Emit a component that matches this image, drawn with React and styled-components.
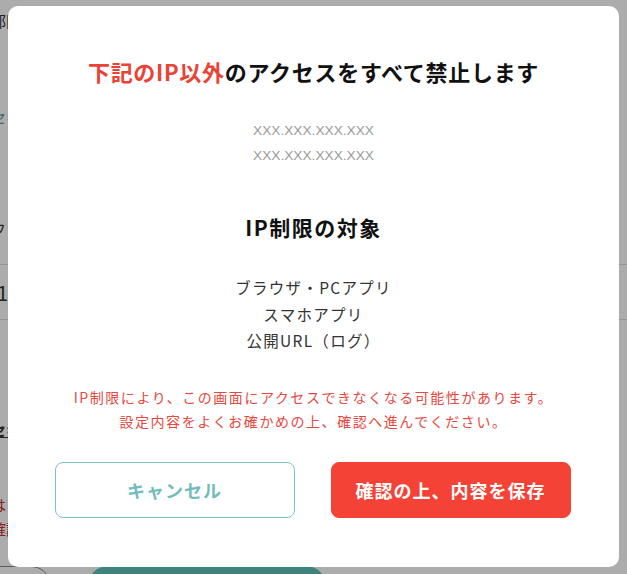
import React from "react";
import styled, { createGlobalStyle } from "styled-components";

const Global = createGlobalStyle`
  html, body { margin: 0; padding: 0; }
  body {
    font-family: "Noto Sans CJK JP", "Noto Sans", sans-serif;
    background: #ffffff;
    overflow: hidden;
  }
`;

const Page = styled.div`
  width: 627px;
  height: 574px;
  overflow: hidden;
  display: flex;
  flex-direction: column;
  color: #333;
  font-size: 15px;
`;

const PageInner = styled.div`
  flex: 1;
  margin-left: -9px;
  display: flex;
  flex-direction: column;
`;

const PageText = styled.div`
  height: ${(p) => p.$h}px;
  margin-top: ${(p) => p.$mt || 0}px;
  display: flex;
  align-items: center;
  white-space: nowrap;
  color: ${(p) => p.$color || "#333"};
  font-weight: ${(p) => (p.$bold ? 700 : 400)};
  font-size: ${(p) => p.$size || 15}px;
  text-decoration: ${(p) => (p.$underline ? "underline" : "none")};
`;

const TableRow = styled.div`
  height: 54px;
  border-top: 1px solid #ddd;
  border-bottom: 1px solid #ddd;
  display: flex;
  align-items: center;
  font-size: 20px;
  padding-left: 6px;
`;

const PageFooter = styled.div`
  display: flex;
  align-items: flex-start;
  gap: 37px;
  margin-top: auto;
  height: 8px;
  overflow: hidden;
`;

const GhostBtn = styled.div`
  flex: none;
  width: 70px;
  height: 40px;
  box-sizing: border-box;
  border: 1px solid #888;
  border-radius: 20px;
  margin-left: -10px;
`;

const TealBtn = styled.div`
  flex: none;
  width: 238px;
  height: 40px;
  background: #5ec3bc;
  border-radius: 20px 20px 0 0;
`;

const Overlay = styled.div`
  position: fixed;
  inset: 0;
  background: rgba(0, 0, 0, 0.325);
  display: flex;
  padding: 6px 8px 7px;
  box-sizing: border-box;
`;

const Modal = styled.div`
  flex: 1;
  background: #fff;
  border-radius: 10px;
  display: flex;
  flex-direction: column;
  align-items: center;
  padding-top: 48px;
  box-sizing: border-box;
`;

const Title = styled.h2`
  margin: 0;
  font-size: 22px;
  line-height: 34px;
  font-weight: 700;
  letter-spacing: 0.7px;
  color: #111;
`;

const Red = styled.span`
  color: #ea4335;
`;

const IpList = styled.div`
  margin-top: 30px;
  display: flex;
  flex-direction: column;
  align-items: center;
  color: #9a9a9a;
  font-family: "Liberation Sans", Arial, sans-serif;
  font-size: 13.7px;
  line-height: 25px;
`;

const SubTitle = styled.h3`
  margin: 44px 0 0;
  font-size: 21px;
  line-height: 30px;
  font-weight: 700;
  letter-spacing: 1.5px;
  color: #111;
`;

const Targets = styled.div`
  margin-top: 32px;
  display: flex;
  flex-direction: column;
  align-items: center;
  font-size: 15.5px;
  line-height: 26.5px;
  letter-spacing: 1.3px;
  color: #333;
`;

const Warning = styled.p`
  margin: 31px 0 0;
  text-align: center;
  color: #e5483e;
  font-size: 14px;
  line-height: 24px;
  letter-spacing: 1.55px;
`;

const Buttons = styled.div`
  margin-top: 29px;
  display: flex;
  gap: 36px;
  margin-right: 2px;
`;

const Button = styled.button`
  width: 240px;
  height: 56px;
  border-radius: 8px;
  font-family: inherit;
  font-size: 18px;
  font-weight: 700;
  letter-spacing: 1px;
  cursor: pointer;
  box-sizing: border-box;
  border: 1px solid ${(p) => (p.$primary ? "#f44336" : "#7cc4c3")};
  background: ${(p) => (p.$primary ? "#f44336" : "#fff")};
  color: ${(p) => (p.$primary ? "#fff" : "#72bcbb")};
`;

export default function App() {
  return (
    <>
      <Global />
      <Page>
        <PageInner>
          <PageText $h={40}>部門</PageText>
          <PageText $h={152} $color="#4a9e98">セキュリティ設定</PageText>
          <PageText $h={72}>ファイル</PageText>
          <TableRow>1</TableRow>
          <PageText $h={30} $mt={94} $bold $underline>セキュリティ</PageText>
          <PageText $h={24} $mt={48} $color="#c33">はじめに</PageText>
          <PageText $h={24} $color="#c33">確認</PageText>
          <PageFooter>
            <GhostBtn />
            <TealBtn />
          </PageFooter>
        </PageInner>
      </Page>
      <Overlay>
        <Modal>
          <Title>
            <Red>下記のIP以外</Red>のアクセスをすべて禁止します
          </Title>
          <IpList>
            <span>XXX.XXX.XXX.XXX</span>
            <span>XXX.XXX.XXX.XXX</span>
          </IpList>
          <SubTitle>IP制限の対象</SubTitle>
          <Targets>
            <span>ブラウザ・PCアプリ</span>
            <span>スマホアプリ</span>
            <span>公開URL（ログ）</span>
          </Targets>
          <Warning>
            IP制限により、この画面にアクセスできなくなる可能性があります。
            <br />
            設定内容をよくお確かめの上、確認へ進んでください。
          </Warning>
          <Buttons>
            <Button type="button">キャンセル</Button>
            <Button type="button" $primary>
              確認の上、内容を保存
            </Button>
          </Buttons>
        </Modal>
      </Overlay>
    </>
  );
}
